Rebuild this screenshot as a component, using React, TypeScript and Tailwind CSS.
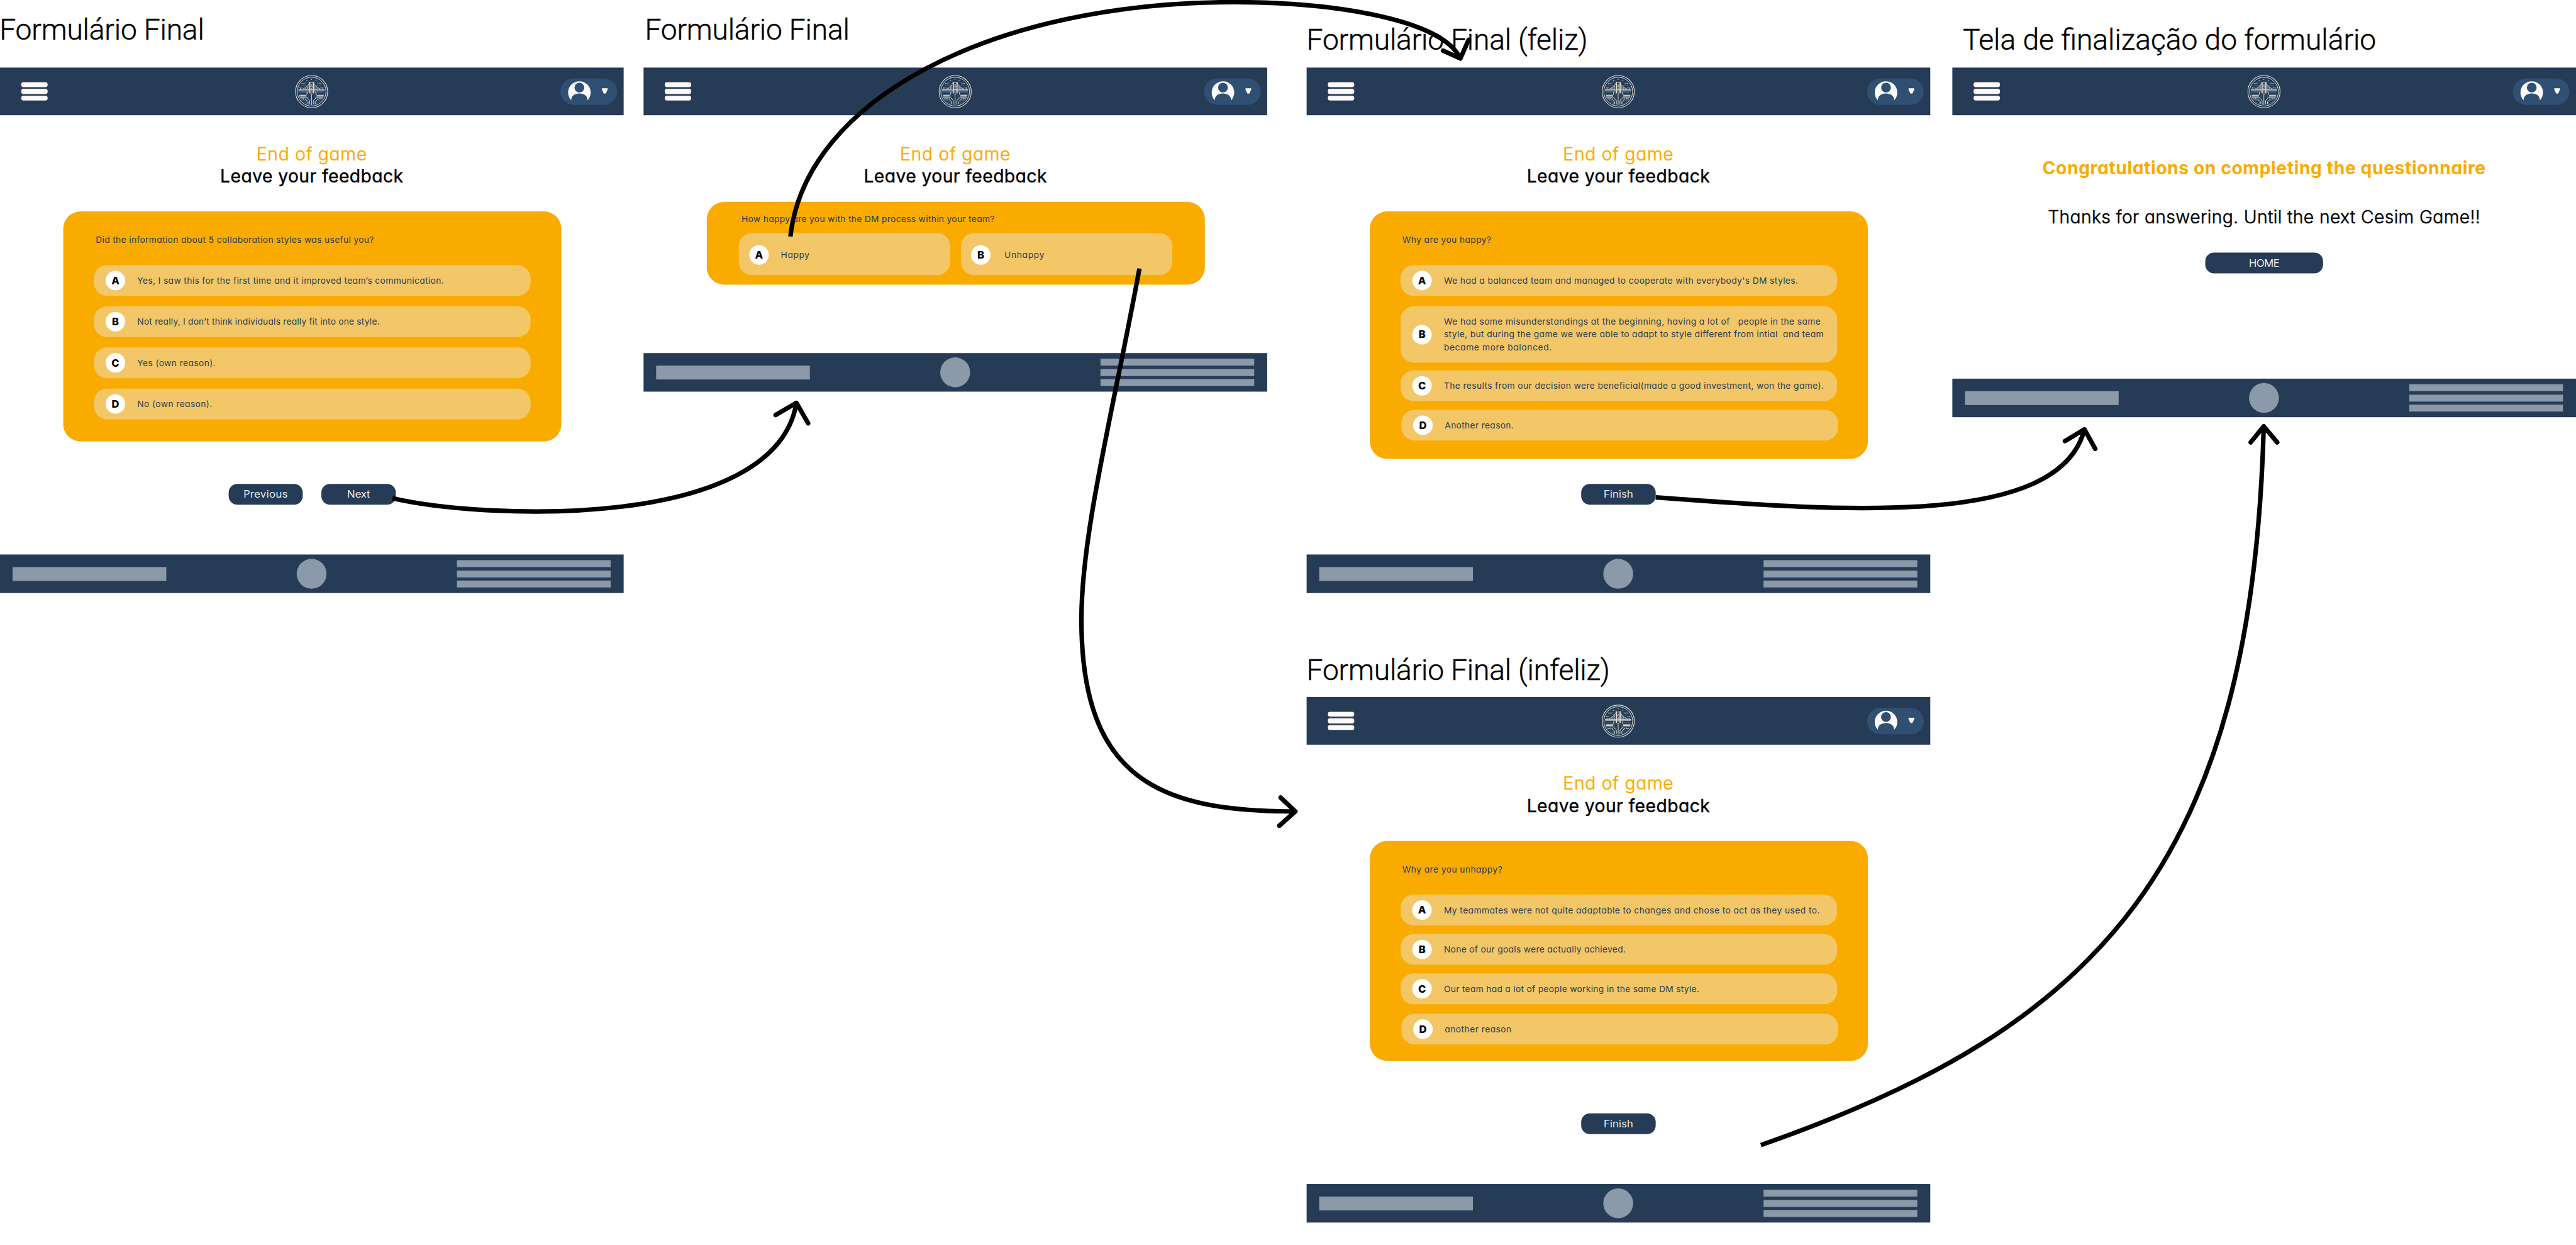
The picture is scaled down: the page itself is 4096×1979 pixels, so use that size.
import type { ReactNode } from "react";

function Logo() {
  return (
    <svg viewBox="243 67 232 232" className="size-[77px]" fill="none">
      <g stroke="#f2eedd">
        <circle cx="359" cy="183" r="112" strokeWidth="4.5" />
        <circle cx="359" cy="183" r="100" strokeWidth="4" />
      </g>
      <g stroke="#4d7593" strokeWidth="3">
        <path d="M318 108h24M376 108h20M300 122h26M394 122h26M286 140h44M388 140h44M270 191h50M398 191h50M270 203h44M404 203h44" />
        <path d="M344 205l-12 18 12 20M374 205l12 18-12 20" />
        <path d="M292 244h22l12 12v16M300 256h10l8 8v6M426 244h-22l-12 12v16M418 256h-10l-8 8v6" strokeWidth="3.5" />
      </g>
      <g fill="#f2eedd">
        <path d="M358.500 92l1.500 4 4 1.500-4 1.500-1.500 4-1.500-4-4-1.500 4-1.500z" />
        <circle cx="326" cy="108" r="3" />
        <circle cx="391" cy="108" r="3" />
        <circle cx="292" cy="127" r="3" />
        <circle cx="425" cy="127" r="3" />
        <circle cx="278" cy="152" r="3" />
        <circle cx="439" cy="152" r="3" />
        <circle cx="281" cy="161" r="2.5" />
        <circle cx="436" cy="161" r="2.5" />
      </g>
      <g stroke="#f2eedd" strokeWidth="2.5">
        <path d="M292 127h18l6 5M425 127h-18l-6 5M278 152h20M439 152h-20" />
        <path d="M346 118q-20 46-78 53M371 118q20 46 78 53" strokeWidth="3" />
        <path d="M300 165v6M307 161v10M314 157v14M321 151v20M328 144v27M335 136v35M417 165v6M410 161v10M403 157v14M396 151v20M389 144v27M382 136v35" />
        <path d="M268 171h180M268 179h180" strokeWidth="3.5" />
      </g>
      <path d="M342 114h8v82h-8zM368 114h8v82h-8z" fill="#dcdccf" />
      <path d="M350 120h18M350 146h18M350 168h18M350 187h18M352 130l13 14M365 130l-13 14M352 153l13 13M365 153l-13 13" stroke="#f2eedd" strokeWidth="3" />
      <g stroke="#f2eedd" strokeWidth="3">
        <circle cx="328" cy="189" r="4" />
        <circle cx="389" cy="189" r="4" />
        <circle cx="358.500" cy="201" r="4" />
        <circle cx="302" cy="233" r="3.5" />
        <circle cx="415" cy="233" r="3.5" />
        <circle cx="317" cy="235" r="3.5" />
        <circle cx="401" cy="235" r="3.5" />
        <path
          strokeWidth="4.200"
          d="M328 194v8l-8 6h-46M389 194v8l8 6h46M274 215h50M443 215h-50M276 223h48l22 22v28M441 223h-48l-22 22v28M358.500 206v70M282 233h16M435 233h-16M320 239l14 14v18M398 239l-14 14v18"
        />
      </g>
    </svg>
  );
}

function Header() {
  return (
    <header className="flex h-[110px] items-center justify-between bg-[#253b56] pr-[15px] pl-[49px]">
      <div className="flex w-[61px] flex-col gap-1">
        <div className="h-[11.3px] rounded-[5px] bg-[#fffafa]" />
        <div className="h-[11.3px] rounded-[5px] bg-[#fffafa]" />
        <div className="h-[11.3px] rounded-[5px] bg-[#fffafa]" />
      </div>
      <div className="ml-[35px]">
        <Logo />
      </div>
      <div className="flex h-[61px] w-[131px] items-center rounded-full bg-[#305073] pl-[17px]">
        <svg viewBox="0 0 54 62" className="h-[61px] w-[54px]">
          <path
            fill="#fffafa"
            fillRule="evenodd"
            d="M7.700 51.500A26.500 26.500 0 1 1 45.900 51.500C47 30 6.600 30 7.700 51.500ZM26.800 10a11.500 11.500 0 1 0 0 23a11.500 11.500 0 1 0 0-23Z"
          />
        </svg>
        <svg viewBox="0 0 15 14" className="mb-0.5 ml-6 h-[14px] w-[15px]">
          <path d="M2.500 2.500h10l-4 8.500h-2z" fill="#fffafa" stroke="#fffafa" strokeWidth="4" strokeLinejoin="round" />
        </svg>
      </div>
    </header>
  );
}

function Footer() {
  return (
    <footer className="flex h-[89px] items-center justify-between bg-[#253b56] pr-[30px] pl-[29px]">
      <div className="h-[32px] w-[355px] bg-[#8c99a8]" />
      <div className="size-[69px] rounded-full bg-[#8c99a8]" />
      <div className="flex w-[355px] flex-col gap-[7.5px]">
        <div className="h-4 bg-[#8c99a8]" />
        <div className="h-4 bg-[#8c99a8]" />
        <div className="h-4 bg-[#8c99a8]" />
      </div>
    </footer>
  );
}

function Screen({ c, children }: { c: string; children: ReactNode }) {
  return (
    <section className="w-[1440px]">
      <Header />
      <main className={"flex flex-col items-center " + c}>{children}</main>
      <Footer />
    </section>
  );
}

function Intro() {
  return (
    <div className="mt-[64px] mb-[0.5px] flex flex-col items-center text-[41px] leading-[51px]">
      <p className="font-light tracking-[1.1px] text-[#faab00] [-webkit-text-stroke:0.8px_#faab00]">End of game</p>
      <p className="tracking-[0.65px] text-black [-webkit-text-stroke:0.6px_#000]">Leave your feedback</p>
    </div>
  );
}

type Line = [text: string, tracking: string];

function Option({ k, lines, c = "h-[71px]", gap = "ml-[28px]" }: { k: string; lines: Line[]; c?: string; gap?: string }) {
  return (
    <div className={"flex items-center rounded-[30px] bg-[#f3c767] text-[20px] leading-[30px] text-[#253b56] " + c}>
      <span className="ml-[27px] flex size-[45px] shrink-0 items-center justify-center rounded-full bg-white text-[24px] font-extrabold text-black">
        {k}
      </span>
      <div className={"flex flex-col whitespace-pre " + gap}>
        {lines.map(([text, tracking]) => (
          <span key={text} className={tracking}>
            {text}
          </span>
        ))}
      </div>
    </div>
  );
}

function Card({ c, q, qc, children }: { c: string; q: string; qc: string; children: ReactNode }) {
  return (
    <div className={"ml-0.5 flex w-[1150px] flex-col rounded-[40px] bg-[#f9ab00] " + c}>
      <p className={"text-[20px] leading-[30px] text-[#253b56] " + qc}>{q}</p>
      {children}
    </div>
  );
}

function Button({ c, children }: { c: string; children: string }) {
  return (
    <button className={"flex h-12 items-center justify-center rounded-[20px] bg-[#253b56] text-[24px] leading-none font-light text-white [-webkit-text-stroke:0.3px_#fff] " + c}>
      {children}
    </button>
  );
}

function Title({ c, children }: { c: string; children: string }) {
  return (
    <h2
      className={
        "font-['Roboto',sans-serif] text-[67px] leading-[80px] font-light tracking-[-0.25px] whitespace-nowrap text-black [-webkit-text-stroke:0.7px_#000] " + c
      }
    >
      {children}
    </h2>
  );
}

function Arrows() {
  return (
    <svg viewBox="0 0 5948 2874" className="absolute inset-0 size-full" fill="none" stroke="#000" strokeWidth="10.5" strokeLinejoin="round">
      <path d="M906 1150C1125 1200 1790 1225 1839 930" />
      <path d="M1825 546C1860 230 2290 5 2850 5C3100 5 3330 50 3370 132" />
      <path d="M2631 620C2570 950 2497 1230 2497 1430C2497 1800 2680 1873 2990 1873" />
      <path d="M3823 1148C4250 1180 4755 1220 4813 991" />
      <path d="M4066 2643C4850 2370 5200 1990 5227 984" />
      <g strokeLinecap="round">
        <path d="M1791 958L1839 930L1866 977" />
        <path d="M3332 117L3372 135L3391 92" />
        <path d="M2957 1841L2991 1873L2954 1906" />
        <path d="M4768 1018L4813 991L4838 1036" />
        <path d="M5197 1021L5227 984L5258 1021" />
      </g>
    </svg>
  );
}

export default function App() {
  return (
    <div className="h-[1979px] w-[4096px] overflow-hidden bg-white">
      <div className="relative flex h-[2874px] w-[5948px] origin-top-left scale-[0.688635] items-start bg-white font-['Inter',sans-serif] [font-feature-settings:'cv11']">
        <div className="w-[1440px] shrink-0">
          <Title c="mt-[28px] mb-[48px] -ml-px">Formulário Final</Title>
          <Screen c="h-[1014px]">
            <Intro />
            <Card
              c="mt-[55.5px] h-[530.5px] pt-[51px] pr-[71.5px] pl-[71px]"
              q="Did the information about 5 collaboration styles was useful you?"
              qc="ml-1 tracking-[0.52px]"
            >
              <div className="mt-[43px] flex flex-col gap-6">
                <Option k="A" lines={[["Yes, I saw this for the first time and it improved team’s communication.", "tracking-[0.55px]"]]} />
                <Option k="B" lines={[["Not really, I don’t think individuals really fit into one style.", "tracking-[0.31px]"]]} />
                <Option k="C" lines={[["Yes (own reason).", "tracking-[0.6px]"]]} />
                <Option k="D" lines={[["No (own reason).", "tracking-[0.6px]"]]} />
              </div>
            </Card>
            <div className="mt-[98.5px] flex gap-[43px] pl-0.5">
              <Button c="w-[171px] tracking-[0.75px]">Previous</Button>
              <Button c="w-[172px] tracking-[0.2px]">Next</Button>
            </div>
          </Screen>
        </div>

        <div className="ml-[46px] w-[1440px] shrink-0">
          <Title c="mt-[28px] mb-[48px] ml-[3px]">Formulário Final</Title>
          <Screen c="h-[549px]">
            <Intro />
            <Card
              c="mt-[33.5px] h-[190.5px] pt-[25px] pl-[75px]"
              q="How happy are you with the DM process within your team?"
              qc="ml-[5px] tracking-[0.48px]"
            >
              <div className="mt-[17px] flex gap-[25px]">
                <Option k="A" c="-ml-px h-[97px] w-[488px] pt-[4px] [&>span]:ml-[24px]" lines={[["Happy", "tracking-[0.9px]"]]} />
                <Option k="B" c="h-[97px] w-[488px] pt-[4px] [&>span]:ml-[23px]" gap="ml-[32px]" lines={[["Unhappy", "tracking-[1px]"]]} />
              </div>
            </Card>
          </Screen>
        </div>

        <div className="ml-[91px] w-[1440px] shrink-0">
          <Title c="mt-[51px] mb-[25px]">Formulário Final (feliz)</Title>
          <Screen c="h-[1014px]">
            <Intro />
            <Card
              c="mt-[55.5px] h-[571px] pt-[51px] pr-[71.5px] pl-[71px]"
              q="Why are you happy?"
              qc="ml-1 tracking-[0.6px]"
            >
              <div className="mt-[43px] flex flex-col">
                <Option k="A" lines={[["We had a balanced team and managed to cooperate with everybody's DM styles.", "tracking-[0.57px]"]]} />
                <Option
                  k="B"
                  c="mt-6 h-[130px]"
                  lines={[
                    ["We had some misunderstandings at the beginning, having a lot of   people in the same", "tracking-[0.6px]"],
                    ["style, but during the game we were able to adapt to style different from intial  and team", "tracking-[0.56px]"],
                    ["became more balanced.", "tracking-[0.9px]"],
                  ]}
                />
                <Option
                  k="C"
                  c="mt-[18px] h-[71px]"
                  lines={[["The results from our decision were beneficial(made a good investment, won the game).", "tracking-[0.58px]"]]}
                />
                <Option k="D" c="mt-5 -mr-0.5 ml-0.5 h-[71px]" lines={[["Another reason.", "tracking-[0.5px]"]]} />
              </div>
            </Card>
            <Button c="mt-[58px] w-[172px] tracking-[0.4px]">Finish</Button>
          </Screen>

          <Title c="mt-[138px] mb-[22px]">Formulário Final (infeliz)</Title>
          <Screen c="h-[1014px]">
            <Intro />
            <Card
              c="mt-[55.5px] h-[508px] pt-[51px] pr-[71.5px] pl-[71px]"
              q="Why are you unhappy?"
              qc="ml-1 tracking-[0.65px]"
            >
              <div className="mt-[43px] flex flex-col">
                <Option k="A" lines={[["My teammates were not quite adaptable to changes and chose to act as they used to.", "tracking-[0.63px]"]]} />
                <Option k="B" c="mt-5 h-[71px]" lines={[["None of our goals were actually achieved.", "tracking-[0.47px]"]]} />
                <Option k="C" c="mt-5 h-[71px]" lines={[["Our team had a lot of people working in the same DM style.", "tracking-[0.45px]"]]} />
                <Option k="D" c="mt-[22px] -mr-0.5 ml-0.5 h-[71px]" lines={[["another reason", "tracking-[0.7px]"]]} />
              </div>
            </Card>
            <Button c="mt-[121px] w-[172px] tracking-[0.4px]">Finish</Button>
          </Screen>
        </div>

        <div className="ml-[51px] w-[1440px] shrink-0">
          <Title c="mt-[51px] mb-[25px] ml-6 !tracking-[0px]">Tela de finalização do formulário</Title>
          <Screen c="h-[608px]">
            <p className="mt-[91px] text-[41px] leading-[60px] font-bold tracking-[0.85px] text-[#faab00]">
              Congratulations on completing the questionnaire
            </p>
            <p className="mt-[53px] text-[41px] leading-[60px] font-light tracking-[0.56px] text-black [-webkit-text-stroke:0.8px_#000]">
              Thanks for answering. Until the next Cesim Game!!
            </p>
            <Button c="mt-[53px] w-[272px] tracking-[-0.34px]">HOME</Button>
          </Screen>
        </div>

        <Arrows />
      </div>
    </div>
  );
}
